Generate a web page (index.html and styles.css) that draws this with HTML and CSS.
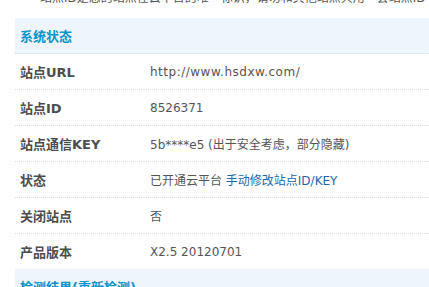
FILE: index.html
```html
<!DOCTYPE html>
<html lang="zh-CN">
<head>
<meta charset="utf-8">
<title>云平台</title>
<link rel="stylesheet" href="styles.css">
</head>
<body>
<div class="tips">站点ID是您的站点在云平台的唯一标识，请勿和其他站点共用一套站点ID</div>
<table class="tb">
  <tr class="partition"><th colspan="2">系统状态</th></tr>
  <tr><td class="label">站点URL</td><td class="value"><span class="url">http://www.hsdxw.com/</span></td></tr>
  <tr><td class="label">站点ID</td><td class="value">8526371</td></tr>
  <tr><td class="label">站点通信KEY</td><td class="value">5b****e5 (出于安全考虑，部分隐藏)</td></tr>
  <tr><td class="label">状态</td><td class="value">已开通云平台 <a href="#" class="link">手动修改站点ID/KEY</a></td></tr>
  <tr><td class="label">关闭站点</td><td class="value">否</td></tr>
  <tr class="last"><td class="label">产品版本</td><td class="value">X2.5 20120701</td></tr>
  <tr class="partition"><th colspan="2">检测结果(<a href="#" class="plink">重新检测</a>)</th></tr>
</table>
</body>
</html>
```

FILE: styles.css
```css
html, body {
  margin: 0;
  padding: 0;
  overflow: hidden;
  background: #fff;
}
body {
  font-family: "DejaVu Sans", "Noto Sans CJK SC", sans-serif;
  font-size: 12px;
  color: #555;
}
.tips {
  margin-top: -11px;
  margin-bottom: 11px;
  padding-left: 40px;
  height: 18px;
  line-height: 18px;
  white-space: nowrap;
  color: #555;
}
.tb {
  margin-left: 15px;
  width: 430px;
  border-collapse: collapse;
  border-spacing: 0;
}
.tb td, .tb th {
  padding: 0;
  height: 35px;
  border-bottom: 1px dotted #d6dde5;
  vertical-align: middle;
  text-align: left;
}
.partition th {
  background: #eef5fc;
  color: #0b93cb;
  font-size: 13px;
  font-weight: bold;
  padding-left: 5px;
}
.last td {
  border-bottom: none;
}
.label {
  width: 124px;
  padding-left: 5px !important;
  font-size: 13px;
  font-weight: bold;
  color: #4d4d4d;
}
.value {
  padding-left: 6px !important;
  color: #555;
  white-space: nowrap;
}
.url {
  letter-spacing: 0.5px;
}
.link {
  color: #2366a8;
  text-decoration: none;
}
.plink {
  color: #0b93cb;
  text-decoration: none;
}
```
